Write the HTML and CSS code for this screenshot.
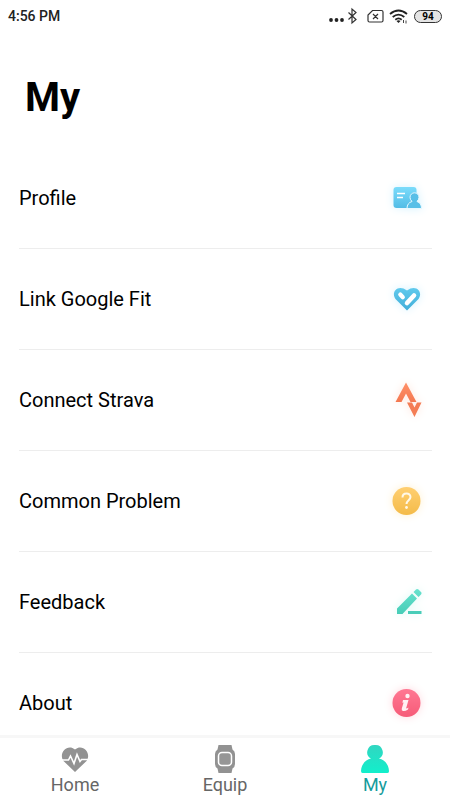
FILE: index.html
```html
<!DOCTYPE html>
<html lang="en">
<head>
<meta charset="utf-8">
<meta name="viewport" content="width=device-width, initial-scale=1">
<title>My</title>
<link rel="stylesheet" href="styles.css">
</head>
<body>
<header class="status">
  <span class="time">4:56 PM</span>
  <div class="indicators">
    <svg class="signals" viewBox="0 0 84 20" aria-hidden="true">
      <g fill="#222"><circle cx="3" cy="14" r="1.9"/><circle cx="8.500" cy="14" r="1.900"/><circle cx="14" cy="14" r="1.900"/></g>
      <g fill="none" stroke="#333" stroke-width="1.200">
        <path d="M20.500 6.500l7.500 7-4 3.500V3l4 3.500-7.500 7"/>
        <path d="M44.500 4.500h9q1.500 0 1.500 1.500v8.500q0 1.500-1.500 1.500h-12q-1.500 0-1.500-1.500V9zM45 8l5 5M50 8l-5 5"/>
      </g>
      <g fill="none" stroke="#222" stroke-width="1.800">
        <path d="M62 8q8.500-7 17 0M64.700 11q5.800-4.800 11.600 0M67.300 13.700q3.200-2.600 6.400 0"/>
      </g>
      <path d="M68.500 15q2-1.500 4 0l-2 2z" fill="#222"/>
      <path d="M75.500 14v3M78 14.500v3" stroke="#444" fill="none"/>
    </svg>
    <span class="battery">94</span>
  </div>
</header>

<main>
  <h1>My</h1>
  <ul class="list">
    <li><a href="#profile">Profile
      <svg class="icon blue" viewBox="0 0 50 50" aria-hidden="true">
        <defs><linearGradient id="blue" x1="0" y1="0" x2="0" y2="1"><stop stop-color="#7bdcfb"/><stop offset="1" stop-color="#52bce6"/></linearGradient></defs>
        <path d="M14.500 14h17q3 0 3 3v18h-20q-3 0-3-3V17q0-3 3-3z" fill="url(#blue)"/>
        <path d="M15 20.500h8M15 24.500h6" stroke="#fff" stroke-width="1.600"/>
        <path d="M25 35.500q0-5.500 5-7-2-2-2-4.200a4.500 4.500 0 0 1 9 0q0 2.200-2 4.200 4.500 1.500 4.500 7z" fill="#58bfe7" stroke="#e6f8ff" stroke-width="1"/>
      </svg></a></li>
    <li><a href="#google-fit">Link Google Fit
      <svg class="icon blue" viewBox="0 0 50 50" aria-hidden="true">
        <defs><linearGradient id="heart" x1="0" y1="0" x2="0" y2="1"><stop stop-color="#60caed"/><stop offset="1" stop-color="#41aed9"/></linearGradient></defs>
        <path d="M25 36.500L13.500 25C8.500 18 16 9.500 25 16.500 34 9.500 41.500 18 36.500 25z" fill="url(#heart)"/>
        <path d="M25 29l7-7.500" fill="none" stroke="#fff" stroke-width="4.600" stroke-linecap="round"/>
        <path d="M18.300 20.500l2.500 2.700" fill="none" stroke="#fff" stroke-width="4.200" stroke-linecap="round"/>
      </svg></a></li>
    <li><a href="#strava">Connect Strava
      <svg class="icon orange" viewBox="0 0 50 50" aria-hidden="true">
        <defs><linearGradient id="orange" x1="0" y1="0" x2="0" y2="1"><stop stop-color="#ff9169"/><stop offset="1" stop-color="#f47850"/></linearGradient></defs>
        <path d="M24 7.500L34.500 27h-6L24 18.500 19.500 27h-6z" fill="url(#orange)"/>
        <path d="M25 27.500h5l2.500 5 2.500-5h4.500L32.500 42z" fill="#f47d55"/>
      </svg></a></li>
    <li><a href="#problems">Common Problem
      <svg class="icon yellow" viewBox="0 0 50 50" aria-hidden="true">
        <defs><linearGradient id="yellow" x1="0" y1="0" x2="0" y2="1"><stop stop-color="#ffcf71"/><stop offset="1" stop-color="#f4bb49"/></linearGradient></defs>
        <circle cx="24.500" cy="25" r="14" fill="url(#yellow)"/>
        <path d="M20.500 21.500c0-5.200 8-5.200 8-.500 0 3-4 3.500-4 7" fill="none" stroke="#fff8e8" stroke-width="2"/>
        <circle cx="24.500" cy="31.500" r="1.400" fill="#fff8e8"/>
      </svg></a></li>
    <li><a href="#feedback">Feedback
      <svg class="icon green" viewBox="0 0 50 50" aria-hidden="true">
        <defs><linearGradient id="green" x1="0" y1="0" x2="0" y2="1"><stop stop-color="#68e2ce"/><stop offset="1" stop-color="#46cdb7"/></linearGradient></defs>
        <path d="M15 37v-5.500L30 16.500l5 5L20.500 37zM31.500 15l2.500-2.500q1-1 2.500 0l2.500 2.500q1 1.200 0 2.500L36.500 20z" fill="url(#green)"/>
        <path d="M26 35.500h13.500" stroke="#48cdb8" stroke-width="3"/>
      </svg></a></li>
    <li><a href="#about">About
      <svg class="icon red" viewBox="0 0 50 50" aria-hidden="true">
        <defs><linearGradient id="red" x1="0" y1="0" x2="0" y2="1"><stop stop-color="#ff7893"/><stop offset="1" stop-color="#f65b78"/></linearGradient></defs>
        <circle cx="24.500" cy="25" r="14" fill="url(#red)"/>
        <circle cx="25.500" cy="18" r="2.200" fill="#fff0f3"/>
        <path d="M21 22h5.500l-2.300 8q0 1 2.300-.500l-.500 2q-3 2-5 1.500-1.800-.500-1.200-2.500l1.800-6-1.200.200z" fill="#fff0f3"/>
      </svg></a></li>
  </ul>
</main>

<nav class="tabs">
  <a href="#home">
    <svg viewBox="0 0 30 30" aria-hidden="true">
      <path d="M15 28L3.500 17C-2 9 7.500-1 15 5.500 22.500-1 32 9 26.500 17z" fill="#929292"/>
      <path d="M1 16h7.500l2-4 3.500 7.500 3-9 3 7 1.500-2H29" fill="none" stroke="#fff" stroke-width="1.600"/>
    </svg>Home</a>
  <a href="#equip">
    <svg viewBox="0 0 30 30" aria-hidden="true">
      <path d="M8.500 1h13l1 4.500Q25 7 25 10v10q0 3-2.500 4.500l-1 4.500h-13l-1-4.500Q5 23 5 20V10q0-3 2.500-4.500z" fill="#929292"/>
      <rect x="8.500" y="8.500" width="13" height="13" rx="3.500" fill="#969696" stroke="#fff" stroke-width="1.500"/>
    </svg>Equip</a>
  <a href="#my" class="active" aria-current="page">
    <svg viewBox="0 0 30 30" aria-hidden="true">
      <defs><linearGradient id="person" x1="0" y1="0" x2="0" y2="1"><stop stop-color="#31d6c1"/><stop offset="1" stop-color="#12efcb"/></linearGradient></defs>
      <path d="M15 1a7.200 7.200 0 0 1 4 13.500c6 1.200 9.800 6.500 10 12.500 0 1.300-.500 2-1.500 2h-25Q1 29 1 27c.200-6 4-11.300 10-12.500A7.200 7.200 0 0 1 15 1z" fill="url(#person)"/>
    </svg>My</a>
</nav>
</body>
</html>
```
FILE: styles.css
```css
* {
  box-sizing: border-box;
}

body {
  margin: 0;
  height: 100vh;
  display: flex;
  flex-direction: column;
  background: #fff;
  color: #000;
  font-family: Roboto, "Liberation Sans", sans-serif;
}

a {
  color: inherit;
  text-decoration: none;
}

.status {
  flex: none;
  display: flex;
  align-items: center;
  justify-content: space-between;
  height: 32px;
  padding: 0 8px;
}

.time {
  font-size: 14px;
  font-weight: 500;
  color: #222;
}

.indicators {
  display: flex;
  align-items: center;
  gap: 2px;
}

.signals {
  width: 84px;
  height: 20px;
}

.battery {
  width: 28px;
  height: 13px;
  border: 1px solid #333;
  border-radius: 7px;
  background: #e4e4e4;
  font-size: 10px;
  font-weight: 700;
  line-height: 11px;
  text-align: center;
}

main {
  flex: 1;
  min-height: 0;
  overflow: hidden;
}

h1 {
  margin: 0;
  height: 116px;
  padding: 42px 25px 0;
  font-size: 40px;
  font-weight: 700;
  line-height: 48px;
}

.list {
  margin: 0;
  padding: 0 18px 0 19px;
  list-style: none;
}

.list a {
  display: flex;
  align-items: center;
  justify-content: space-between;
  height: 101px;
  border-bottom: 1px solid #ededed;
  font-size: 20px;
}

.icon {
  width: 50px;
  height: 50px;
}

.blue {
  filter: drop-shadow(0 0 4px #d6f3ff);
}

.orange {
  filter: drop-shadow(0 0 4px #ffe6dd);
}

.yellow {
  filter: drop-shadow(0 0 4px #fff1d0);
}

.green {
  filter: drop-shadow(0 0 4px #dcfaf5);
}

.red {
  filter: drop-shadow(0 0 4px #ffd8df);
}

.tabs {
  flex: none;
  display: flex;
  height: 65px;
  border-top: 3px solid #f7f7f7;
  background: #fff;
  color: #666;
  font-size: 18px;
  line-height: 22px;
}

.tabs a {
  flex: 1;
  display: flex;
  flex-direction: column;
  align-items: center;
  padding-top: 6px;
}

.tabs svg {
  width: 30px;
  height: 30px;
}

.tabs .active {
  color: #169c9c;
}
```
